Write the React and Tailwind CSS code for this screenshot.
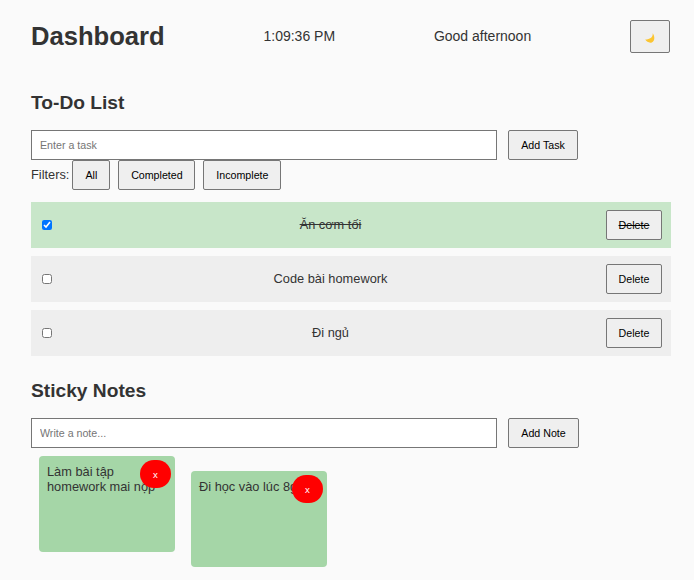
const btn = 'h-[30px] border border-[#767676] rounded-[2px] bg-[#efefef] text-[10.67px] text-black';
const inputCls = 'w-[466px] h-[30px] px-2 border border-[#767676] bg-white text-[10.67px] text-[#333] placeholder:text-[#757575] outline-none';

const tasks = [
  { id: 1, text: 'Ăn cơm tối', done: true },
  { id: 2, text: 'Code bài homework', done: false },
  { id: 3, text: 'Đi ngủ', done: false },
];

const notes = [
  { id: 1, text: 'Làm bài tập homework mai nộp', offset: '' },
  { id: 2, text: 'Đi học vào lúc 8giờ', offset: 'mt-[23px]' },
];

function Moon() {
  return (
    <svg width="10" height="10" viewBox="0 0 10 10" className="mt-[2px] ml-px">
      <path d="M7.6 0.2C8.3 3.6 5.6 6.4 0.2 6.6C1.6 8.9 4.4 10.2 6.8 9.4C9.8 8.3 10.2 3.2 7.6 0.2Z" fill="#fbc531" />
    </svg>
  );
}

export default function App() {
  return (
    <div className="min-h-[580px] h-[580px] overflow-hidden bg-[#fafafa] text-[#333] text-[12.8px] font-['Liberation_Sans',Arial,sans-serif]">
      <div className="w-[640px] ml-[31px] pt-5">
        <header className="flex justify-between items-center h-[33px]">
          <h1 className="text-[25.6px] font-bold">Dashboard</h1>
          <span className="text-[14px]">1:09:36 PM</span>
          <span className="text-[14px]">Good afternoon</span>
          <button className="w-10 h-[33px] mr-px flex items-center justify-center border border-[#767676] rounded-[2px] bg-[#efefef]">
            <Moon />
          </button>
        </header>

        <h3 className="mt-[39px] text-[19.2px] font-bold leading-[22px]">To-Do List</h3>
        <div className="flex gap-[11px] mt-4">
          <input className={inputCls} placeholder="Enter a task" />
          <button className={`${btn} w-[70px]`}>Add Task</button>
        </div>
        <div className="flex items-center h-[30px]">
          <span className="mr-[3px] -mt-[1px]">Filters:</span>
          <button className={`${btn} w-[38px]`}>All</button>
          <button className={`${btn} w-[77px] ml-2`}>Completed</button>
          <button className={`${btn} w-[78px] ml-2`}>Incomplete</button>
        </div>

        <ul className="mt-3 flex flex-col gap-2">
          {tasks.map((t) => (
            <li key={t.id} className={`flex items-center justify-between py-2 pl-2 pr-[9px] ${t.done ? 'bg-[#c8e6c9]' : 'bg-[#eeeeee]'}`}>
              <input type="checkbox" defaultChecked={t.done} className="m-[3px] w-[10px] h-[10px]" />
              <span className={t.done ? 'line-through' : ''}>{t.text}</span>
              <button className={`${btn} w-[56px] ${t.done ? 'line-through' : ''}`}>Delete</button>
            </li>
          ))}
        </ul>

        <h3 className="mt-6 text-[19.2px] font-bold leading-[22px]">Sticky Notes</h3>
        <div className="flex gap-[11px] mt-4">
          <input className={inputCls} placeholder="Write a note..." />
          <button className={`${btn} w-[71px]`}>Add Note</button>
        </div>
        <div className="flex items-start">
          {notes.map((n) => (
            <div key={n.id} className={`relative w-[136px] h-[96px] m-2 p-2 rounded-[4px] bg-[#a5d6a7] leading-[15px] ${n.offset}`}>
              {n.text}
              <button className="absolute top-1 right-1 w-[31px] h-[28px] rounded-full bg-[#ff0000] text-white text-[9.6px]">x</button>
            </div>
          ))}
        </div>
      </div>
    </div>
  );
}
